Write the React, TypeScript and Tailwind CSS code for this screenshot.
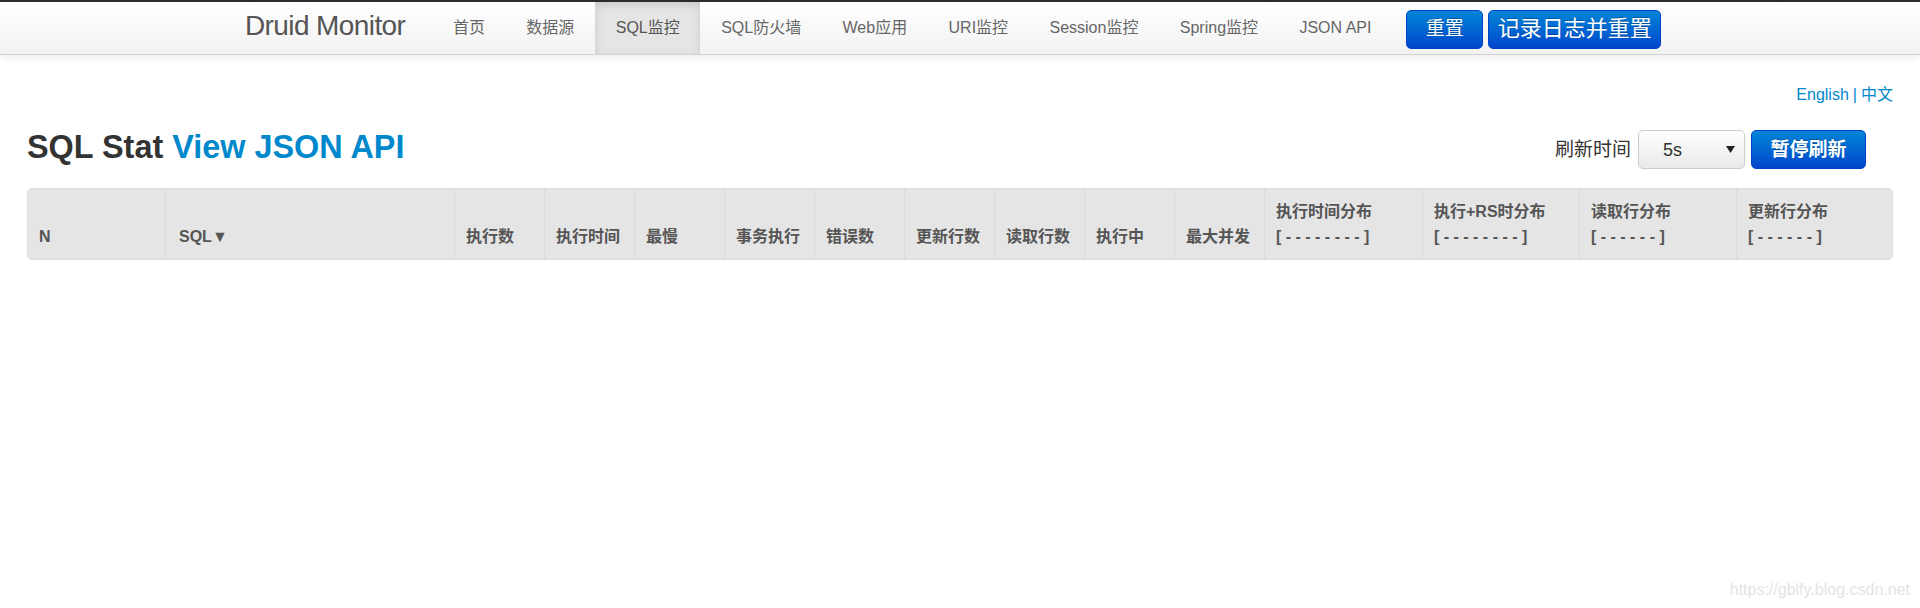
import React from "react";

const navItems = [
  "首页",
  "数据源",
  "SQL监控",
  "SQL防火墙",
  "Web应用",
  "URI监控",
  "Session监控",
  "Spring监控",
  "JSON API",
];

const cols: { label: string; sub?: string; extra?: string }[] = [
  { label: "N" },
  { label: "SQL▼", extra: "pl-[13px]" },
  { label: "执行数" },
  { label: "执行时间" },
  { label: "最慢" },
  { label: "事务执行" },
  { label: "错误数" },
  { label: "更新行数" },
  { label: "读取行数" },
  { label: "执行中" },
  { label: "最大并发" },
  { label: "执行时间分布", sub: "[ - - - - - - - - ]" },
  { label: "执行+RS时分布", sub: "[ - - - - - - - - ]" },
  { label: "读取行分布", sub: "[ - - - - - - ]" },
  { label: "更新行分布", sub: "[ - - - - - - ]" },
];

export default function App() {
  return (
    <div className="relative h-[608px] w-full overflow-hidden bg-white font-['Liberation_Sans','Noto_Sans_CJK_SC',sans-serif] text-[#333]">
      {/* Navbar */}
      <div className="relative z-10 h-[55px] border-t-2 border-b border-t-[#2b2b2b] border-b-[#d4d4d4] bg-linear-to-b from-white to-[#f2f2f2] shadow-[0_1px_10px_rgba(0,0,0,0.1)]">
        <div className="mx-auto flex h-full w-[1430px] items-stretch">
          <div className="mr-[27px] flex items-center pb-[4px] text-[28px] leading-[32px] tracking-[-0.6px] text-[#555]">
            Druid Monitor
          </div>
          <ul className="flex items-stretch">
            {navItems.map((item) => (
              <li key={item} className="flex">
                <a
                  className={
                    item === "SQL监控"
                      ? "flex items-center bg-[#e5e5e5] px-[20.7px] text-[16px] leading-[20px] text-[#555] shadow-[inset_0_3px_8px_rgba(0,0,0,0.125)]"
                      : "flex items-center px-[20.7px] text-[16px] leading-[20px] text-[#666]"
                  }
                >
                  {item}
                </a>
              </li>
            ))}
          </ul>
          <div className="ml-[14px] mt-[2px] flex items-center gap-[5px]">
            <button className="flex h-[39px] w-[77px] items-center justify-center rounded-[5px] border border-[#0044cc] bg-linear-to-b from-[#0a84d6] to-[#0044cc] text-[19px] leading-[24px] text-white [text-shadow:0_-1px_0_rgba(0,0,0,0.25)]">
              重置
            </button>
            <button className="flex h-[39px] w-[173px] items-center justify-center rounded-[5px] border border-[#0044cc] bg-linear-to-b from-[#0a84d6] to-[#0044cc] text-[22px] leading-[26px] text-white [text-shadow:0_-1px_0_rgba(0,0,0,0.25)]">
              记录日志并重置
            </button>
          </div>
        </div>
      </div>

      {/* Content */}
      <div className="px-[27px]">
        <div className="mt-[28px] flex justify-end text-[16px] leading-[24px] text-[#0088cc]">
          <a>English</a>
          <span className="px-[4px]">|</span>
          <a>中文</a>
        </div>

        <div className="mt-[23px] flex items-start justify-between">
          <h3 className="text-[32.4px] font-bold leading-[35px] text-[#333]">
            SQL Stat <a className="text-[#0088cc]">View JSON API</a>
          </h3>
          <div className="mr-[27px] flex h-[39px] items-center">
            <span className="mr-[7px] text-[19px] leading-[24px] text-[#333]">刷新时间</span>
            <div className="flex h-[39px] w-[107px] items-center justify-between rounded-[5px] border border-[#cccccc] bg-linear-to-b from-white to-[#e9e9e9] pl-[24px] pr-[9px] shadow-[inset_0_1px_0_rgba(255,255,255,0.2)]">
              <span className="text-[18px] leading-[22px] text-[#333]">5s</span>
              <svg width="9" height="7" viewBox="0 0 9 7">
                <path d="M0 0 L9 0 L4.5 7 Z" fill="#222" />
              </svg>
            </div>
            <button className="ml-[6px] flex h-[39px] w-[115px] items-center justify-center rounded-[5px] border border-[#0044cc] bg-linear-to-b from-[#0a84d6] to-[#0044cc] text-[19px] font-bold leading-[24px] text-white [text-shadow:0_-1px_0_rgba(0,0,0,0.25)]">
              暂停刷新
            </button>
          </div>
        </div>

        <div className="mt-[19px] overflow-hidden rounded-[5px] border border-[#dcdcdc] bg-[#e5e5e5]">
          <div className="grid grid-cols-[137px_289px_90px_90px_90px_90px_90px_90px_90px_90px_90px_158px_157px_157px_1fr]">
            {cols.map((c, i) => (
              <div
                key={c.label}
                className={
                  (i === 0 ? "" : "border-l border-[#d9d9d9] ") +
                  "flex flex-col justify-end pb-[10px] pl-[11px] pt-[10px] text-[16px] font-bold leading-[25px] text-[#555] " +
                  (c.extra ?? "")
                }
              >
                <span className="whitespace-nowrap">{c.label}</span>
                {c.sub && <span className="whitespace-nowrap">{c.sub}</span>}
              </div>
            ))}
          </div>
        </div>
      </div>

      {/* Watermark */}
      <div className="absolute bottom-[8px] right-[10px] text-[16px] leading-[20px] text-[#e4e4e4]">
        https://gblfy.blog.csdn.net
      </div>
    </div>
  );
}
